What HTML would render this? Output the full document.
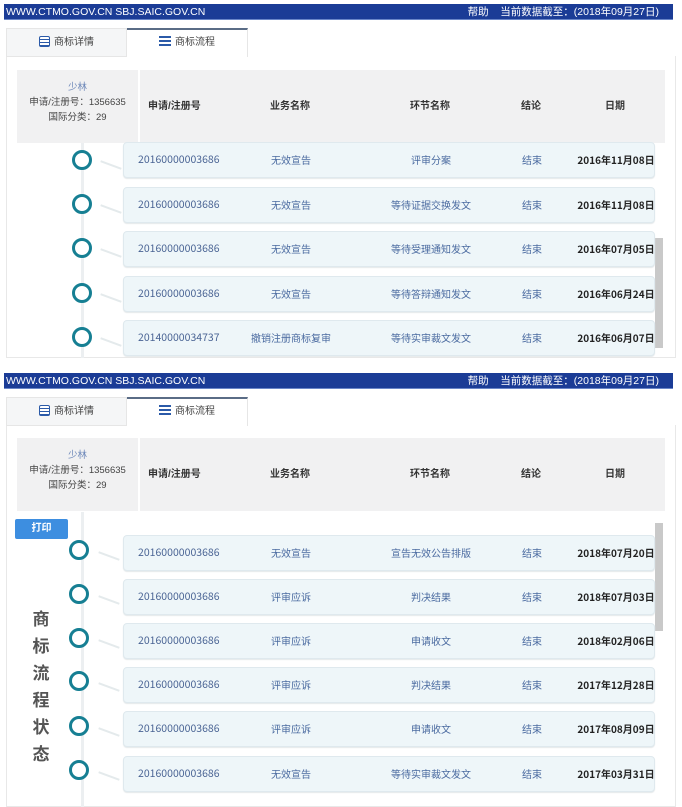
<!DOCTYPE html>
<html><head><meta charset="utf-8"><style>
*{margin:0;padding:0;box-sizing:border-box}
body{width:682px;height:807px;background:#fff;position:relative;overflow:hidden;font-family:"Liberation Sans","Noto Sans CJK SC",sans-serif;font-size:10px;color:#333}
.a{position:absolute}
.bar{left:4px;width:669px;height:16px;background:#1b3c96;color:#fff;font-size:10.5px;line-height:16px;padding-left:2px;border-bottom:1px solid #6a86c8}
.bar span{position:absolute;right:14px;top:0}
.tab1{left:6px;width:121px;height:29px;background:#f5f6f7;border:1px solid #e6e6e6;font-size:10px;color:#444;text-align:center;line-height:28px}
.tab2{left:127px;width:121px;height:29px;background:#fff;border-top:2px solid #5a6c86;border-right:1px solid #e6e6e6;font-size:10px;color:#444;text-align:center;line-height:26px}
.ic{display:inline-block;width:11px;height:11px;border:1.5px solid #2b5aa8;border-radius:2px;vertical-align:-2px;margin-right:4px;background:repeating-linear-gradient(#fff 0 2px,#2b5aa8 2px 3px)}
.ic2{display:inline-block;width:12px;height:11px;vertical-align:-2px;margin-right:4px;background:repeating-linear-gradient(#2b5aa8 0 2px,#fff 2px 4px)}
.frame{left:6px;width:670px;border:1px solid #e8e8e8;border-top:none}
.lb{left:17px;width:121px;height:73px;background:#f1f1f2;text-align:center;font-size:9.5px;color:#444;line-height:15px;padding-top:10px}
.lb b{font-weight:normal;color:#6b86b8}
.hd{left:140px;width:525px;height:73px;background:#f1f1f2;font-size:10px;font-weight:bold;color:#333}
.hd i{position:absolute;font-style:normal;top:30px;line-height:14px;transform:translateX(-50%)}
.line{left:81px;width:3px;background:#eceff1}
.row{left:123px;width:532px;height:36px;background:#eef6f9;border:1px solid #dfe9ee;border-radius:4px;box-shadow:0 1px 1px #e4e8ea;font-size:10px;color:#4a6aa0;font-family:"Noto Sans CJK SC",sans-serif}
.row i{position:absolute;font-style:normal;top:0;height:34px;line-height:34px;transform:translateX(-50%);white-space:nowrap}
.row .d{color:#222;font-weight:bold}
.row .n{left:14px;transform:none;color:#4a6494;font-size:10.5px}
.cir{width:20px;height:20px;border:3px solid #167f93;border-radius:50%;background:#fff}
.tail{width:22px;height:2px;background:#e4eaec;transform:rotate(20deg)}
.sb{left:655px;width:8px;background:#c9c9c9}
.vt{left:30px;width:22px;font-size:17px;font-weight:bold;color:#555;line-height:27px;text-align:center}
.btn{left:15px;top:519px;width:53px;height:20px;background:#3d8ee0;color:#fff;font-size:10px;font-weight:bold;text-align:center;line-height:20px;border-radius:2px}
</style></head><body>

<!-- TOP -->
<div class="a bar" style="top:4px">WWW.CTMO.GOV.CN SBJ.SAIC.GOV.CN<span>帮助&nbsp;&nbsp;&nbsp;&nbsp;当前数据截至：(2018年09月27日)</span></div>
<div class="a frame" style="top:56px;height:302px"></div>
<div class="a tab1" style="top:28px"><span class="ic"></span>商标详情</div>
<div class="a tab2" style="top:28px"><span class="ic2"></span>商标流程</div>
<div class="a lb" style="top:70px"><b>少林</b><br>申请/注册号：1356635<br>国际分类：29</div>
<div class="a hd" style="top:70px"><i style="left:8px;transform:none">申请/注册号</i><i style="left:150px">业务名称</i><i style="left:290px">环节名称</i><i style="left:391px">结论</i><i style="left:475px">日期</i></div>
<div class="a line" style="top:143px;height:215px"></div>
<div class="a sb" style="top:238px;height:110px"></div>

<div class="a cir" style="left:72px;top:150px"></div><div class="a tail" style="left:100px;top:164px"></div>
<div class="a row" style="top:142px"><i class="n">20160000003686</i><i style="left:167px">无效宣告</i><i style="left:307px">评审分案</i><i style="left:408px">结束</i><i class="d" style="left:492px">2016年11月08日</i></div>
<div class="a cir" style="left:72px;top:194px"></div><div class="a tail" style="left:100px;top:208px"></div>
<div class="a row" style="top:187px"><i class="n">20160000003686</i><i style="left:167px">无效宣告</i><i style="left:307px">等待证据交换发文</i><i style="left:408px">结束</i><i class="d" style="left:492px">2016年11月08日</i></div>
<div class="a cir" style="left:72px;top:238px"></div><div class="a tail" style="left:100px;top:252px"></div>
<div class="a row" style="top:231px"><i class="n">20160000003686</i><i style="left:167px">无效宣告</i><i style="left:307px">等待受理通知发文</i><i style="left:408px">结束</i><i class="d" style="left:492px">2016年07月05日</i></div>
<div class="a cir" style="left:72px;top:283px"></div><div class="a tail" style="left:100px;top:297px"></div>
<div class="a row" style="top:276px"><i class="n">20160000003686</i><i style="left:167px">无效宣告</i><i style="left:307px">等待答辩通知发文</i><i style="left:408px">结束</i><i class="d" style="left:492px">2016年06月24日</i></div>
<div class="a cir" style="left:72px;top:327px"></div><div class="a tail" style="left:100px;top:341px"></div>
<div class="a row" style="top:320px"><i class="n">20140000034737</i><i style="left:167px">撤销注册商标复审</i><i style="left:307px">等待实审裁文发文</i><i style="left:408px">结束</i><i class="d" style="left:492px">2016年06月07日</i></div>

<!-- BOTTOM -->
<div class="a bar" style="top:373px">WWW.CTMO.GOV.CN SBJ.SAIC.GOV.CN<span>帮助&nbsp;&nbsp;&nbsp;&nbsp;当前数据截至：(2018年09月27日)</span></div>
<div class="a frame" style="top:425px;height:382px"></div>
<div class="a tab1" style="top:397px"><span class="ic"></span>商标详情</div>
<div class="a tab2" style="top:397px"><span class="ic2"></span>商标流程</div>
<div class="a lb" style="top:438px"><b>少林</b><br>申请/注册号：1356635<br>国际分类：29</div>
<div class="a hd" style="top:438px"><i style="left:8px;transform:none">申请/注册号</i><i style="left:150px">业务名称</i><i style="left:290px">环节名称</i><i style="left:391px">结论</i><i style="left:475px">日期</i></div>
<div class="a line" style="top:512px;height:295px"></div>
<div class="a sb" style="top:523px;height:108px"></div>
<div class="a btn">打印</div>
<div class="a vt" style="top:606px">商<br>标<br>流<br>程<br>状<br>态</div>

<div class="a cir" style="left:69px;top:540px"></div><div class="a tail" style="left:98px;top:555px"></div>
<div class="a row" style="top:535px"><i class="n">20160000003686</i><i style="left:167px">无效宣告</i><i style="left:307px">宣告无效公告排版</i><i style="left:408px">结束</i><i class="d" style="left:492px">2018年07月20日</i></div>
<div class="a cir" style="left:69px;top:584px"></div><div class="a tail" style="left:98px;top:599px"></div>
<div class="a row" style="top:579px"><i class="n">20160000003686</i><i style="left:167px">评审应诉</i><i style="left:307px">判决结果</i><i style="left:408px">结束</i><i class="d" style="left:492px">2018年07月03日</i></div>
<div class="a cir" style="left:69px;top:628px"></div><div class="a tail" style="left:98px;top:643px"></div>
<div class="a row" style="top:623px"><i class="n">20160000003686</i><i style="left:167px">评审应诉</i><i style="left:307px">申请收文</i><i style="left:408px">结束</i><i class="d" style="left:492px">2018年02月06日</i></div>
<div class="a cir" style="left:69px;top:671px"></div><div class="a tail" style="left:98px;top:686px"></div>
<div class="a row" style="top:667px"><i class="n">20160000003686</i><i style="left:167px">评审应诉</i><i style="left:307px">判决结果</i><i style="left:408px">结束</i><i class="d" style="left:492px">2017年12月28日</i></div>
<div class="a cir" style="left:69px;top:716px"></div><div class="a tail" style="left:98px;top:731px"></div>
<div class="a row" style="top:711px"><i class="n">20160000003686</i><i style="left:167px">评审应诉</i><i style="left:307px">申请收文</i><i style="left:408px">结束</i><i class="d" style="left:492px">2017年08月09日</i></div>
<div class="a cir" style="left:69px;top:760px"></div><div class="a tail" style="left:98px;top:775px"></div>
<div class="a row" style="top:756px"><i class="n">20160000003686</i><i style="left:167px">无效宣告</i><i style="left:307px">等待实审裁文发文</i><i style="left:408px">结束</i><i class="d" style="left:492px">2017年03月31日</i></div>

</body></html>
